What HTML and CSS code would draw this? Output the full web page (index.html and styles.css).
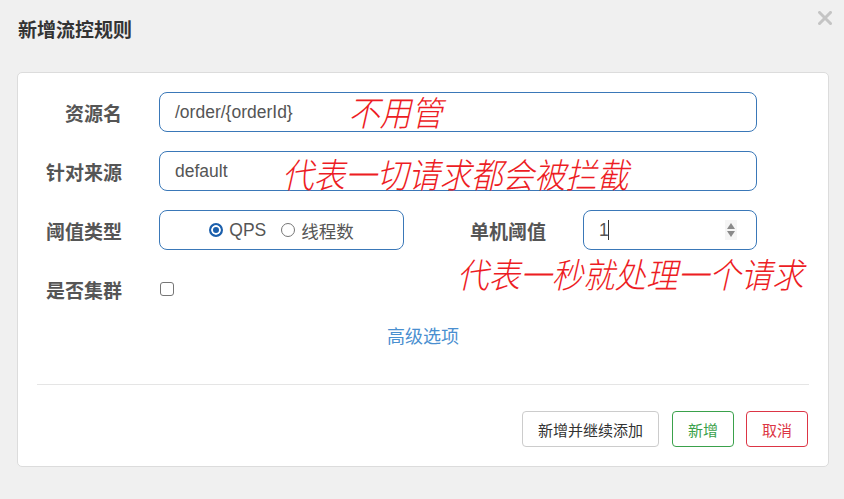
FILE: index.html
```html
<!DOCTYPE html>
<html lang="zh-CN">

<head>
    <meta charset="UTF-8">
    <meta name="viewport" content="width=device-width, initial-scale=1.0">
    <title>新增流控规则</title>
    <link rel="stylesheet" href="styles.css">
</head>

<body>
    <div class="modal">
        <div class="modal-header">
            <h3 class="modal-title">新增流控规则</h3>
            <span class="close-btn">
                <svg width="14" height="14" viewBox="0 0 14 14">
                    <path d="M1.5 1.5 L12.5 12.5 M12.5 1.5 L1.5 12.5" stroke="#c4c4c4" stroke-width="3" stroke-linecap="square" fill="none"/>
                </svg>
            </span>
        </div>

        <div class="modal-body">
            <div class="form">
                <div class="form-row">
                    <label class="form-label">资源名</label>
                    <div class="field wide">
                        <span class="field-text">/order/{orderId}</span>
                        <span class="note note-resource">不用管</span>
                    </div>
                </div>

                <div class="form-row">
                    <label class="form-label">针对来源</label>
                    <div class="field wide">
                        <span class="field-text">default</span>
                        <span class="note note-origin">代表一切请求都会被拦截</span>
                    </div>
                </div>

                <div class="form-row">
                    <label class="form-label">阈值类型</label>
                    <div class="field radio-group">
                        <span class="radio checked"></span>
                        <span class="radio-text">QPS</span>
                        <span class="radio"></span>
                        <span class="radio-text">线程数</span>
                    </div>
                    <label class="form-label label-count">单机阈值</label>
                    <div class="field number">
                        <span class="field-text">1</span>
                        <span class="caret"></span>
                        <span class="spinner">
                            <span class="arrow-up"></span>
                            <span class="arrow-down"></span>
                        </span>
                    </div>
                </div>

                <div class="form-row">
                    <label class="form-label">是否集群</label>
                    <span class="checkbox"></span>
                    <span class="note note-count">代表一秒就处理一个请求</span>
                </div>
            </div>

            <div class="advanced">
                <a class="advanced-link">高级选项</a>
            </div>

            <div class="divider"></div>

            <div class="modal-footer">
                <button class="btn btn-default">新增并继续添加</button>
                <button class="btn btn-success">新增</button>
                <button class="btn btn-danger">取消</button>
            </div>
        </div>
    </div>
</body>

</html>
```

FILE: styles.css
```css
/* 全局样式 */
* {
    margin: 0;
    padding: 0;
    box-sizing: border-box;
}

body {
    background-color: #f0f0f0;
    color: #555;
    font-family: "Liberation Sans", "Noto Sans CJK SC", sans-serif;
}

.modal {
    position: relative;
    width: 844px;
    height: 499px;
}

/* 标题栏 */
.modal-header {
    height: 72px;
    padding: 18px 18px 0;
}

.modal-title {
    font-size: 19px;
    font-weight: bold;
    color: #333;
    line-height: 26px;
}

.close-btn {
    position: absolute;
    top: 11px;
    right: 12px;
    width: 14px;
    height: 14px;
    display: block;
}

.close-btn svg {
    display: block;
}

/* 表单卡片 */
.modal-body {
    margin: 0 15px 0 17px;
    background-color: #fff;
    border: 1px solid #dcdcdc;
    border-radius: 5px;
}

.form {
    padding: 19px 71px 0 0;
}

.form-row {
    position: relative;
    display: flex;
    align-items: center;
    height: 40px;
    margin-bottom: 19px;
}

.form-label {
    width: 104px;
    margin-right: 37px;
    text-align: right;
    font-size: 19px;
    font-weight: bold;
    color: #555;
}

.label-count {
    width: 142px;
}

.field {
    position: relative;
    height: 40px;
    border: 1px solid #3a78b8;
    border-radius: 8px;
    display: flex;
    align-items: center;
    padding: 0 15px;
    font-size: 17.5px;
    color: #555;
}

.field.wide {
    flex: 1;
}

.field-text {
    white-space: nowrap;
}

/* 单选 */
.radio-group {
    width: 245px;
    justify-content: center;
    padding: 0;
}

.radio {
    width: 14px;
    height: 14px;
    border: 1px solid #767676;
    border-radius: 50%;
    margin-right: 6px;
}

.radio.checked {
    border: 2px solid #1b5fac;
    background-color: #1b5fac;
    box-shadow: inset 0 0 0 2px #fff;
}

.radio-text {
    margin-right: 15px;
    color: #555;
}

.radio-text:last-child {
    margin-right: 0;
}

/* 数值输入 */
.number {
    width: 174px;
    padding-left: 15px;
}

.caret {
    width: 1px;
    height: 20px;
    background-color: #333;
    margin-left: -1px;
}

.spinner {
    position: absolute;
    right: 19px;
    top: 9px;
    width: 12px;
    height: 20px;
    background-color: #f5f5f5;
    display: flex;
    flex-direction: column;
    align-items: center;
    justify-content: center;
    gap: 2px;
}

.arrow-up {
    border-left: 4px solid transparent;
    border-right: 4px solid transparent;
    border-bottom: 6px solid #8a8a8a;
}

.arrow-down {
    border-left: 4px solid transparent;
    border-right: 4px solid transparent;
    border-top: 6px solid #8a8a8a;
}

/* 复选框 */
.checkbox {
    width: 14px;
    height: 14px;
    margin-left: 1px;
    border: 1px solid #767676;
    border-radius: 3px;
}

/* 红色批注 */
.note {
    position: absolute;
    color: #ed1c24;
    font-family: "Noto Sans CJK SC", sans-serif;
    font-size: 31.5px;
    font-style: italic;
    font-weight: 300;
    line-height: 36px;
    white-space: nowrap;
    transform: scaleY(1.1);
}

.note-resource {
    left: 188px;
    top: 0;
}

.note-origin {
    left: 122px;
    top: 3px;
}

.note-count {
    left: 439px;
    top: -14px;
}

/* 高级选项 */
.advanced {
    text-align: center;
    margin-top: -5px;
    height: 28px;
    line-height: 28px;
}

.advanced-link {
    font-size: 18px;
    color: #4a8fd0;
    cursor: pointer;
}

.divider {
    height: 1px;
    margin: 33px 19px 0;
    background-color: #e5e5e5;
}

/* 底部按钮 */
.modal-footer {
    display: flex;
    justify-content: flex-end;
    padding: 26px 20px 19px;
}

.btn {
    height: 36px;
    padding: 0 15px;
    margin-left: 13px;
    background-color: #fff;
    border-radius: 4px;
    font-family: "Liberation Sans", "Noto Sans CJK SC", sans-serif;
    font-size: 15px;
    cursor: pointer;
}

.btn-default {
    border: 1px solid #ccc;
    color: #333;
}

.btn-success {
    border: 1px solid #3aa14b;
    color: #3aa14b;
}

.btn-danger {
    margin-left: 12px;
    border: 1px solid #dc3545;
    color: #dc3545;
}
```
